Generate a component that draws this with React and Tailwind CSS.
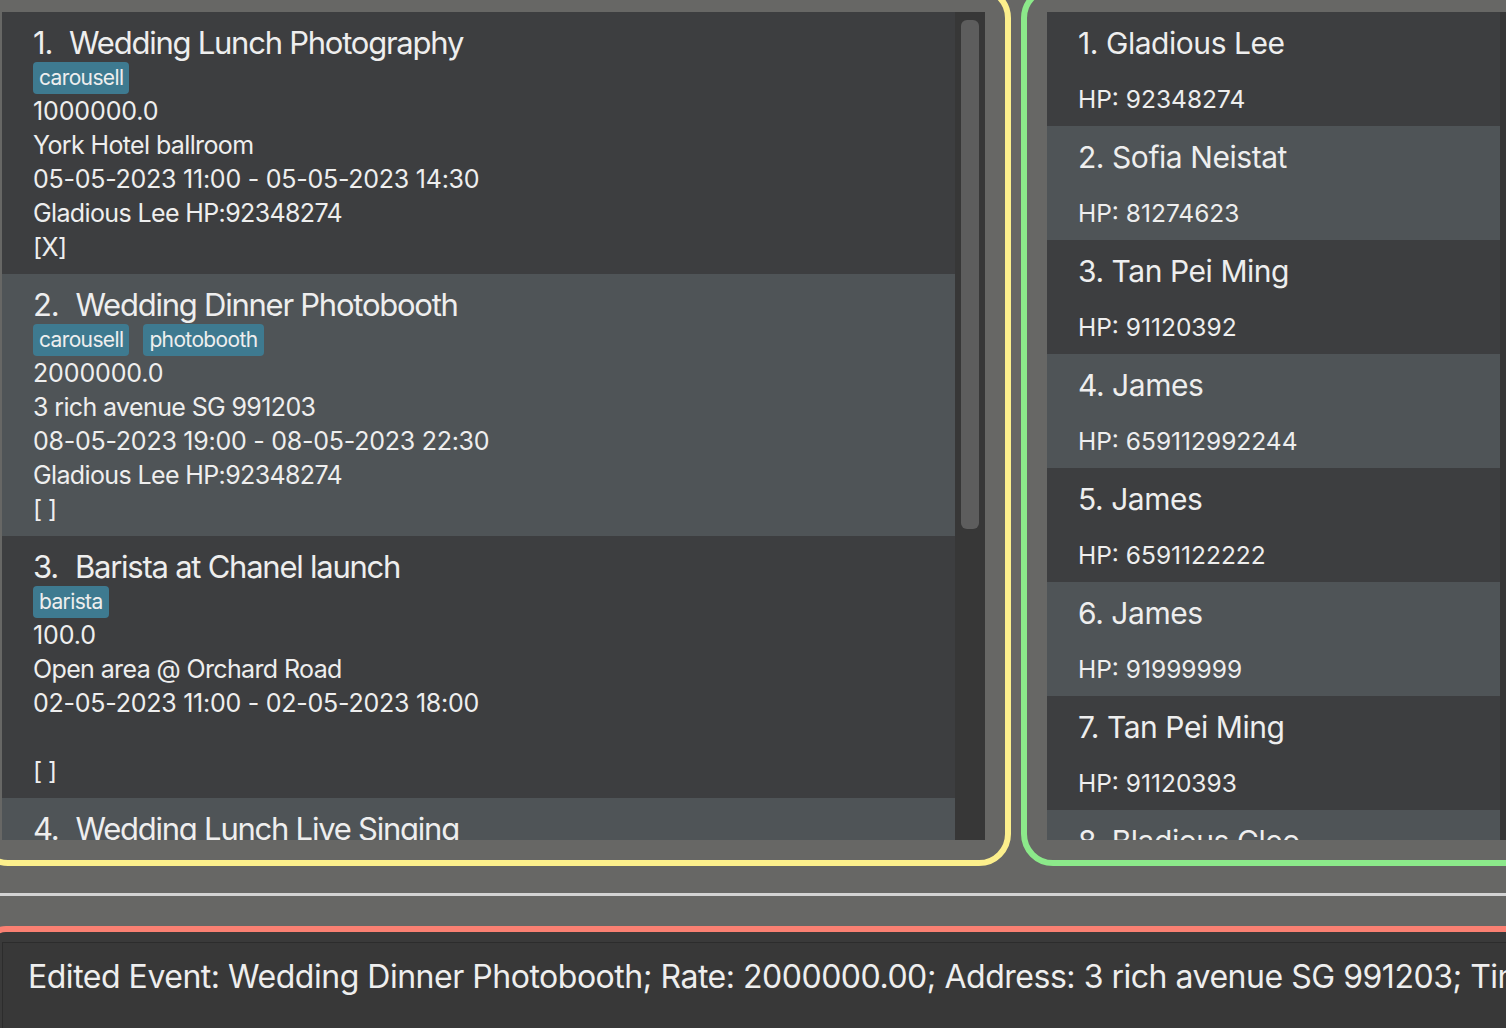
import React from 'react';

const EVENTS = [
  {
    name: 'Wedding Lunch Photography',
    tags: ['carousell'],
    rate: '1000000.0',
    address: 'York Hotel ballroom',
    time: '05-05-2023 11:00 - 05-05-2023 14:30',
    contact: 'Gladious Lee HP:92348274',
    mark: '[X]'
  },
  {
    name: 'Wedding Dinner Photobooth',
    tags: ['carousell', 'photobooth'],
    rate: '2000000.0',
    address: '3 rich avenue SG 991203',
    time: '08-05-2023 19:00 - 08-05-2023 22:30',
    contact: 'Gladious Lee HP:92348274',
    mark: '[ ]'
  },
  {
    name: 'Barista at Chanel launch',
    tags: ['barista'],
    rate: '100.0',
    address: 'Open area @ Orchard Road',
    time: '02-05-2023 11:00 - 02-05-2023 18:00',
    contact: '',
    mark: '[ ]'
  },
  {
    name: 'Wedding Lunch Live Singing',
    tags: ['singing'],
    rate: '500.0',
    address: 'York Hotel ballroom',
    time: '05-05-2023 11:00 - 05-05-2023 14:30',
    contact: '',
    mark: '[ ]'
  }
];

const CONTACTS = [
  { name: 'Gladious Lee', phone: '92348274' },
  { name: 'Sofia Neistat', phone: '81274623' },
  { name: 'Tan Pei Ming', phone: '91120392' },
  { name: 'James', phone: '659112992244' },
  { name: 'James', phone: '6591122222' },
  { name: 'James', phone: '91999999' },
  { name: 'Tan Pei Ming', phone: '91120393' },
  { name: 'Bladious Cleo', phone: '91234567' }
];

const EventCard = ({ event, index }) => (
  <div className={`shrink-0 pl-[31px] pt-[12px] pb-[10px] ${index % 2 ? 'bg-[#4f5457]' : 'bg-[#3d3e40]'}`}>
    <div className="flex h-[38px] items-center gap-[17px] text-[31px] leading-[38px] tracking-[-0.04em]">
      <span>{index + 1}.</span>
      <span>{event.name}</span>
    </div>
    <div className="flex h-[32px] gap-[14px]">
      {event.tags.map(t => (
        <span key={t} className="rounded-[4px] bg-[#3e7a90] px-[6px] text-[21px] leading-[32px] tracking-[-0.03em]">
          {t}
        </span>
      ))}
    </div>
    {/* digit lines are kept looser than word lines */}
    <div className="text-[25px] leading-[34px] tracking-[-0.025em]">
      <div className="h-[34px] tracking-[-0.005em]">{event.rate}</div>
      <div className="h-[34px]">{event.address}</div>
      <div className="h-[34px] tracking-[-0.01em]">{event.time}</div>
      <div className="h-[34px]">{event.contact}</div>
      <div className="h-[34px]">{event.mark}</div>
    </div>
  </div>
);

const ContactCard = ({ contact, index }) => (
  <div className={`shrink-0 pl-[31px] pt-[12px] pb-[10px] ${index % 2 ? 'bg-[#4f5457]' : 'bg-[#3d3e40]'}`}>
    <div className="h-[38px] text-[30px] leading-[38px] tracking-[-0.015em]">
      {index + 1}. {contact.name}
    </div>
    <div className="mt-[20px] h-[34px] text-[24.5px] leading-[34px]">HP: {contact.phone}</div>
  </div>
);

export default function App() {
  return (
    <div className="h-[1028px] w-[1506px] overflow-hidden bg-[#676765] text-[#eeeeee] font-['Inter',sans-serif]">
      {/* lists */}
      <div className="-ml-[24px] -mt-[14px] flex h-[880px] gap-[10px]">
        <div className="flex w-[1035px] shrink-0 rounded-[32px] border-[6px] border-[#fcef8c] p-[20px]">
          <div className="flex min-w-0 flex-1 flex-col overflow-hidden">
            {EVENTS.map((e, i) => (
              <EventCard key={i} event={e} index={i} />
            ))}
          </div>
          <div className="w-[30px] shrink-0 bg-[#373737] px-[6px] pt-[8px]">
            <div className="h-[509px] rounded-[6px] bg-[#5d5d5d]" />
          </div>
        </div>

        <div className="flex w-[535px] shrink-0 rounded-[32px] border-[6px] border-[#8ce98a] p-[20px]">
          <div className="flex w-[453px] shrink-0 flex-col overflow-hidden">
            {CONTACTS.map((c, i) => (
              <ContactCard key={i} contact={c} index={i} />
            ))}
          </div>
          <div className="w-[30px] shrink-0 bg-[#373737]" />
        </div>
      </div>

      {/* divider */}
      <div className="mt-[27px] h-[3px] bg-[#d3d3d3]" />

      {/* result box */}
      <div className="-ml-[14px] mt-[30px] w-[1600px] rounded-[20px] border-[6px] border-[#fa8072] bg-[#3a3a3a] p-[10px]">
        <div className="h-[200px] overflow-hidden whitespace-nowrap border border-[#2c2c2c] bg-[#383838] pl-[25px] pt-[14px] text-[32px] leading-[40px] tracking-[-0.015em]">
          Edited Event: Wedding Dinner Photobooth; Rate: 2000000.00; Address: 3 rich avenue SG 991203; Time: 08-05-2023 19:00 - 08-05-2023 22:30
        </div>
      </div>
    </div>
  );
}
